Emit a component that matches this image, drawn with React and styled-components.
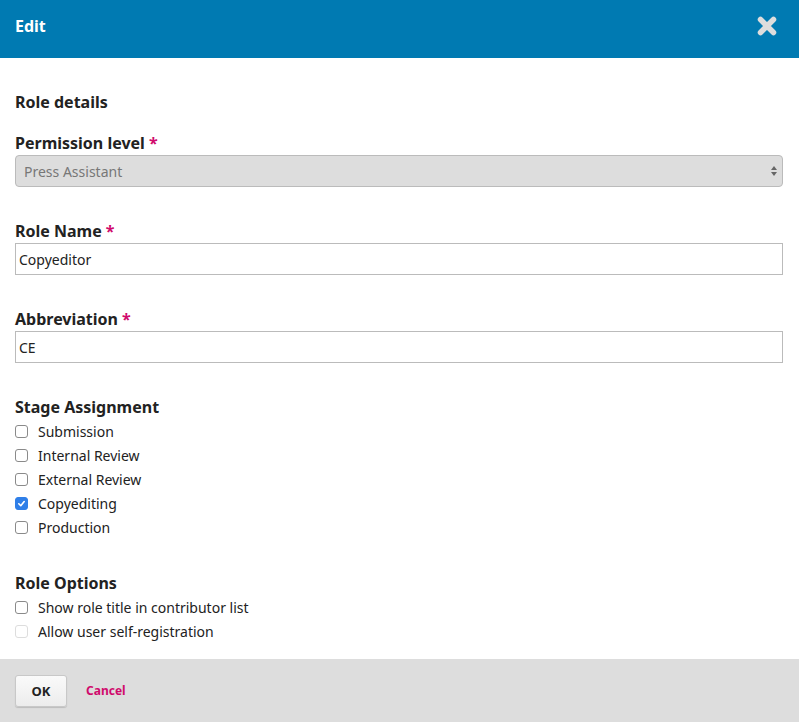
import React, { useState } from 'react';
import styled, { createGlobalStyle } from 'styled-components';

const COLORS = {
  primary: '#007ab2',
  text: '#222',
  required: '#d00a6c',
  field: '#bbb',
  footer: '#ddd',
};

const Global = createGlobalStyle`
  html, body { margin: 0; padding: 0; background: #fff; }
  body { font-family: "Noto Sans", "Open Sans", sans-serif; color: ${COLORS.text}; }
`;

const Modal = styled.div`
  width: 799px;
  height: 722px;
  display: flex;
  flex-direction: column;
  background: #fff;
`;

const Header = styled.header`
  height: 58px;
  flex: none;
  background: ${COLORS.primary};
  display: flex;
  align-items: center;
  justify-content: space-between;
  padding: 0 22px 0 15px;
  box-sizing: border-box;
`;

const Title = styled.h1`
  margin: 0 0 6px;
  font-size: 16px;
  font-weight: 700;
  color: #fff;
`;

const CloseBtn = styled.button`
  width: 20px;
  height: 20px;
  padding: 0;
  border: 0;
  background: transparent;
  cursor: pointer;
  display: grid;
  place-items: center;
  margin-bottom: 6px;
`;

const Body = styled.form`
  flex: 1;
  padding: 34px 16px 0 15px;
  box-sizing: border-box;
  display: flex;
  flex-direction: column;
`;

const Heading = styled.h2`
  margin: 0 0 21px;
  font-size: 16px;
  line-height: 20px;
  font-weight: 700;
`;

const Field = styled.div`
  display: flex;
  flex-direction: column;
  gap: 2px;
  margin-bottom: 34px;
`;

const Label = styled.label`
  font-size: 16px;
  line-height: 20px;
  font-weight: 700;
`;

const Req = styled.span`
  color: ${COLORS.required};
  margin-left: 4px;
`;

const SelectBox = styled.div`
  height: 32px;
  box-sizing: border-box;
  border: 1px solid ${COLORS.field};
  border-radius: 4px;
  background: #ddd;
  display: flex;
  align-items: center;
  justify-content: space-between;
  padding: 0 4px 0 8px;
  font-size: 14px;
  color: #777;
`;

const Input = styled.input`
  height: 32px;
  box-sizing: border-box;
  border: 1px solid ${COLORS.field};
  border-radius: 0;
  padding: 0 3px;
  font-family: inherit;
  font-size: 14px;
  color: ${COLORS.text};
  outline: none;
`;

const Group = styled.fieldset`
  border: 0;
  margin: 0 0 ${p => (p.$last ? '16px' : '34px')};
  padding: 0;
  display: flex;
  flex-direction: column;
`;

const Legend = styled.div`
  font-size: 16px;
  line-height: 20px;
  font-weight: 700;
  margin-bottom: 2px;
`;

const Row = styled.label`
  height: 24px;
  display: flex;
  align-items: center;
  gap: 10px;
  font-size: 14px;
  color: ${COLORS.text};
  cursor: pointer;
`;

const Box = styled.span`
  width: 11px;
  height: 11px;
  flex: none;
  border: 1px solid ${p => (p.$checked ? '#2f7fe8' : p.$disabled ? '#ddd' : '#8a8a8a')};
  border-radius: 3px;
  background: ${p => (p.$checked ? '#2f7fe8' : '#fff')};
  display: grid;
  place-items: center;
  margin-top: 1px;
`;

const Footer = styled.footer`
  height: 63px;
  flex: none;
  background: ${COLORS.footer};
  display: flex;
  align-items: flex-start;
  gap: 19px;
  padding: 16px 15px 0;
  box-sizing: border-box;
  margin-top: auto;
`;

const OkBtn = styled.button`
  width: 52px;
  height: 32px;
  border: 1px solid #c8c8c8;
  border-radius: 3px;
  background: linear-gradient(#fafafa, #ececec);
  box-shadow: 0 1px 1px rgba(0, 0, 0, 0.15);
  font-family: inherit;
  font-size: 13px;
  font-weight: 700;
  color: ${COLORS.text};
  cursor: pointer;
`;

const CancelLink = styled.a`
  font-size: 12px;
  font-weight: 700;
  line-height: 32px;
  color: ${COLORS.required};
  text-decoration: none;
  cursor: pointer;
`;

function Check({ label, checked, disabled, onToggle }) {
  return (
    <Row onClick={disabled ? undefined : onToggle}>
      <Box $checked={checked} $disabled={disabled}>
        {checked && (
          <svg width="9" height="9" viewBox="0 0 10 10" fill="none" stroke="#fff" strokeWidth="1.8" strokeLinecap="round" strokeLinejoin="round">
            <path d="M2 5.3L4.2 7.4L8 2.8" />
          </svg>
        )}
      </Box>
      {label}
    </Row>
  );
}

export default function App() {
  const [stages, setStages] = useState({
    Submission: false,
    'Internal Review': false,
    'External Review': false,
    Copyediting: true,
    Production: false,
  });
  const [showTitle, setShowTitle] = useState(false);

  const toggle = name => setStages(s => ({ ...s, [name]: !s[name] }));

  return (
    <Modal>
      <Global />
      <Header>
        <Title>Edit</Title>
        <CloseBtn aria-label="Close">
          <svg width="20" height="20" viewBox="0 0 20 20" fill="none" stroke="#ddd" strokeWidth="5.5" strokeLinecap="round">
            <path d="M3.5 3.5L16.5 16.5M16.5 3.5L3.5 16.5" />
          </svg>
        </CloseBtn>
      </Header>

      <Body onSubmit={e => e.preventDefault()}>
        <Heading>Role details</Heading>

        <Field>
          <Label>Permission level<Req>*</Req></Label>
          <SelectBox>
            Press Assistant
            <svg width="8" height="14" viewBox="0 0 8 14" fill="#666">
              <path d="M4 2L7 6H1Z" />
              <path d="M4 12L7 8H1Z" />
            </svg>
          </SelectBox>
        </Field>

        <Field>
          <Label>Role Name<Req>*</Req></Label>
          <Input defaultValue="Copyeditor" />
        </Field>

        <Field>
          <Label>Abbreviation<Req>*</Req></Label>
          <Input defaultValue="CE" />
        </Field>

        <Group>
          <Legend>Stage Assignment</Legend>
          {Object.keys(stages).map(name => (
            <Check key={name} label={name} checked={stages[name]} onToggle={() => toggle(name)} />
          ))}
        </Group>

        <Group $last>
          <Legend>Role Options</Legend>
          <Check label="Show role title in contributor list" checked={showTitle} onToggle={() => setShowTitle(v => !v)} />
          <Check label="Allow user self-registration" disabled />
        </Group>
      </Body>

      <Footer>
        <OkBtn type="button">OK</OkBtn>
        <CancelLink>Cancel</CancelLink>
      </Footer>
    </Modal>
  );
}
